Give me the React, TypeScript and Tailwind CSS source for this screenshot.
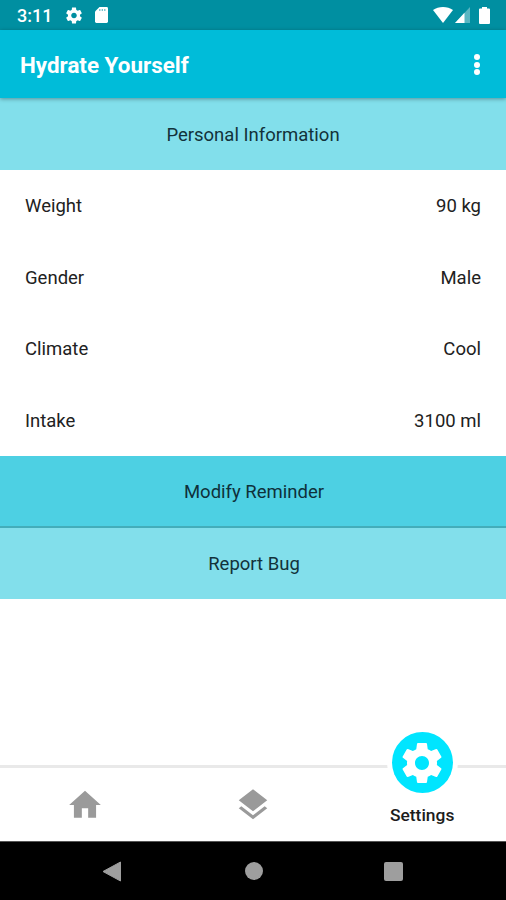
const GEAR =
  'M19.43 12.98c.04-.32.07-.64.07-.98s-.03-.66-.07-.98l2.11-1.65c.19-.15.24-.42.12-.64l-2-3.46c-.12-.22-.39-.3-.61-.22l-2.49 1c-.52-.4-1.08-.73-1.69-.98l-.38-2.65C14.46 2.18 14.25 2 14 2h-4c-.25 0-.46.18-.49.42l-.38 2.65c-.61.25-1.17.59-1.69.98l-2.49-1c-.23-.09-.49 0-.61.22l-2 3.46c-.13.22-.07.49.12.64l2.11 1.65c-.04.32-.07.65-.07.98s.03.66.07.98l-2.11 1.65c-.19.15-.24.42-.12.64l2 3.46c.12.22.39.3.61.22l2.49-1c.52.4 1.08.73 1.69.98l.38 2.65c.03.24.24.42.49.42h4c.25 0 .46-.18.49-.42l.38-2.65c.61-.25 1.17-.59 1.69-.98l2.49 1c.23.09.49 0 .61-.22l2-3.46c.12-.22.07-.49-.12-.64l-2.11-1.65zM12 15.5c-1.93 0-3.5-1.57-3.5-3.5s1.57-3.5 3.5-3.5 3.5 1.57 3.5 3.5-1.57 3.5-3.5 3.5z';

const rows = [
  ['Weight', '90 kg'],
  ['Gender', 'Male'],
  ['Climate', 'Cool'],
  ['Intake', '3100 ml'],
];

function StatusBar() {
  return (
    <div className="flex h-[30px] items-center justify-between bg-[#008fa1] pr-[16px] pl-[17px] text-white">
      <div className="flex items-center">
        <span className="w-[49px] pt-[2px] text-[18px] leading-none font-medium">3:11</span>
        <svg className="h-[17px] w-[16px]" viewBox="2 1.5 20 21" fill="currentColor">
          <path d={GEAR} />
        </svg>
        <svg className="ml-[13px] h-[16px] w-[13px]" viewBox="0 0 13 16">
          <path d="M4.5 0H11.6Q13 0 13 1.4V14.6Q13 16 11.6 16H1.4Q0 16 0 14.6V4.5Z" fill="#fff" />
          <path d="M4.8 2v2M7.3 2v2M9.8 2v2" stroke="#008fa1" strokeWidth="1.2" opacity=".6" />
        </svg>
      </div>
      <div className="flex items-center">
        <svg className="h-[16px] w-[20px]" viewBox="0 0 20 16" fill="#fff">
          <path d="M0 3.1Q4.3 0 10 0T20 3.1L10 16Z" />
        </svg>
        <svg className="ml-[2px] h-[16px] w-[15px]" viewBox="0 0 15 16" fill="#fff">
          <path d="M0 16 15 0V16Z" opacity=".35" />
          <path d="M0 16 9.5 5.8V16Z" />
        </svg>
        <svg className="ml-[9px] h-[17px] w-[11px]" viewBox="0 0 11 17" fill="#fff">
          <path d="M3 0h5v1.5H10q1 0 1 1V16q0 1-1 1H1q-1 0-1-1V2.5q0-1 1-1h2Z" />
        </svg>
      </div>
    </div>
  );
}

export default function App() {
  return (
    <div className="flex h-[900px] w-[506px] flex-col overflow-hidden bg-white font-[Roboto,sans-serif] text-[18.5px] text-[#212121]">
      <StatusBar />
      <header className="z-10 flex h-[68px] items-center justify-between bg-[#00bcd9] pr-[26px] pl-[20px] text-white shadow-[0_1px_4px_rgba(0,0,0,0.35)]">
        <h1 className="pt-[3px] text-[22.4px] font-bold">Hydrate Yourself</h1>
        <div className="flex flex-col gap-[1.5px] pt-px">
          <i className="h-[6px] w-[6px] rounded-full bg-white" />
          <i className="h-[6px] w-[6px] rounded-full bg-white" />
          <i className="h-[6px] w-[6px] rounded-full bg-white" />
        </div>
      </header>

      <section className="flex h-[72px] items-center justify-center bg-[#82dfeb] pt-[3px] text-[#12323a]">Personal Information</section>
      <dl className="flex h-[286px] flex-col">
        {rows.map(([label, value]) => (
          <div key={label} className="flex flex-1 items-center justify-between px-[25px] pt-[3px]">
            <dt>{label}</dt>
            <dd>{value}</dd>
          </div>
        ))}
      </dl>
      <button className="h-[72px] shrink-0 border-b-2 border-[#43adba] bg-[#4dd0e3] pt-[3px] pl-[2px] text-[#0f303a]">Modify Reminder</button>
      <button className="h-[71px] shrink-0 bg-[#82dfeb] pt-[2px] pl-[2px] text-[#12323a]">Report Bug</button>

      <div className="flex-1" />
      <nav className="grid h-[76px] shrink-0 grid-cols-3 border-t-[3px] border-[#e9e9e9] text-[#9a9a9a]">
        <div className="flex justify-center pt-[18px] pl-px">
          <svg className="h-[38px] w-[38px]" viewBox="0 0 24 24" fill="currentColor">
            <path d="M10 20v-6h4v6h5v-8h3L12 3 2 12h3v8z" />
          </svg>
        </div>
        <div className="flex justify-center pt-[18px] pl-px">
          <svg className="h-[38px] w-[38px]" viewBox="0 0 24 24" fill="currentColor">
            <path d="M11.99 18.54l-7.37-5.73L3 14.07l9 7 9-7-1.63-1.27-7.38 5.74zM12 16l7.36-5.73L21 9l-9-7-9 7 1.63 1.27L12 16z" />
          </svg>
        </div>
        <div className="relative flex justify-center pl-px">
          <div className="absolute -top-[41px] flex h-[71px] w-[71px] items-center justify-center rounded-full bg-white">
            <div className="flex h-[61px] w-[61px] items-center justify-center rounded-full bg-[#00e5ff] text-white">
              <svg className="h-[48px] w-[48px]" viewBox="0 0 24 24" fill="currentColor">
                <path d={GEAR} />
              </svg>
            </div>
          </div>
          <span className="pt-[36px] text-[17.4px] leading-[22px] font-medium text-[#1c1c1c]">Settings</span>
        </div>
      </nav>

      <footer className="flex h-[59px] shrink-0 items-center border-t border-[#555] bg-black pl-[102px]">
        <svg className="h-[21px] w-[20px]" viewBox="0 0 20 21">
          <path d="M1 10.5 18.5 1V20Z" fill="#9e9e9e" stroke="#9e9e9e" strokeLinejoin="round" />
        </svg>
        <i className="ml-[122.5px] h-[18px] w-[18px] rounded-full bg-[#9e9e9e]" />
        <i className="ml-[121.5px] h-[19px] w-[19px] rounded-[2px] bg-[#9e9e9e]" />
      </footer>
    </div>
  );
}
